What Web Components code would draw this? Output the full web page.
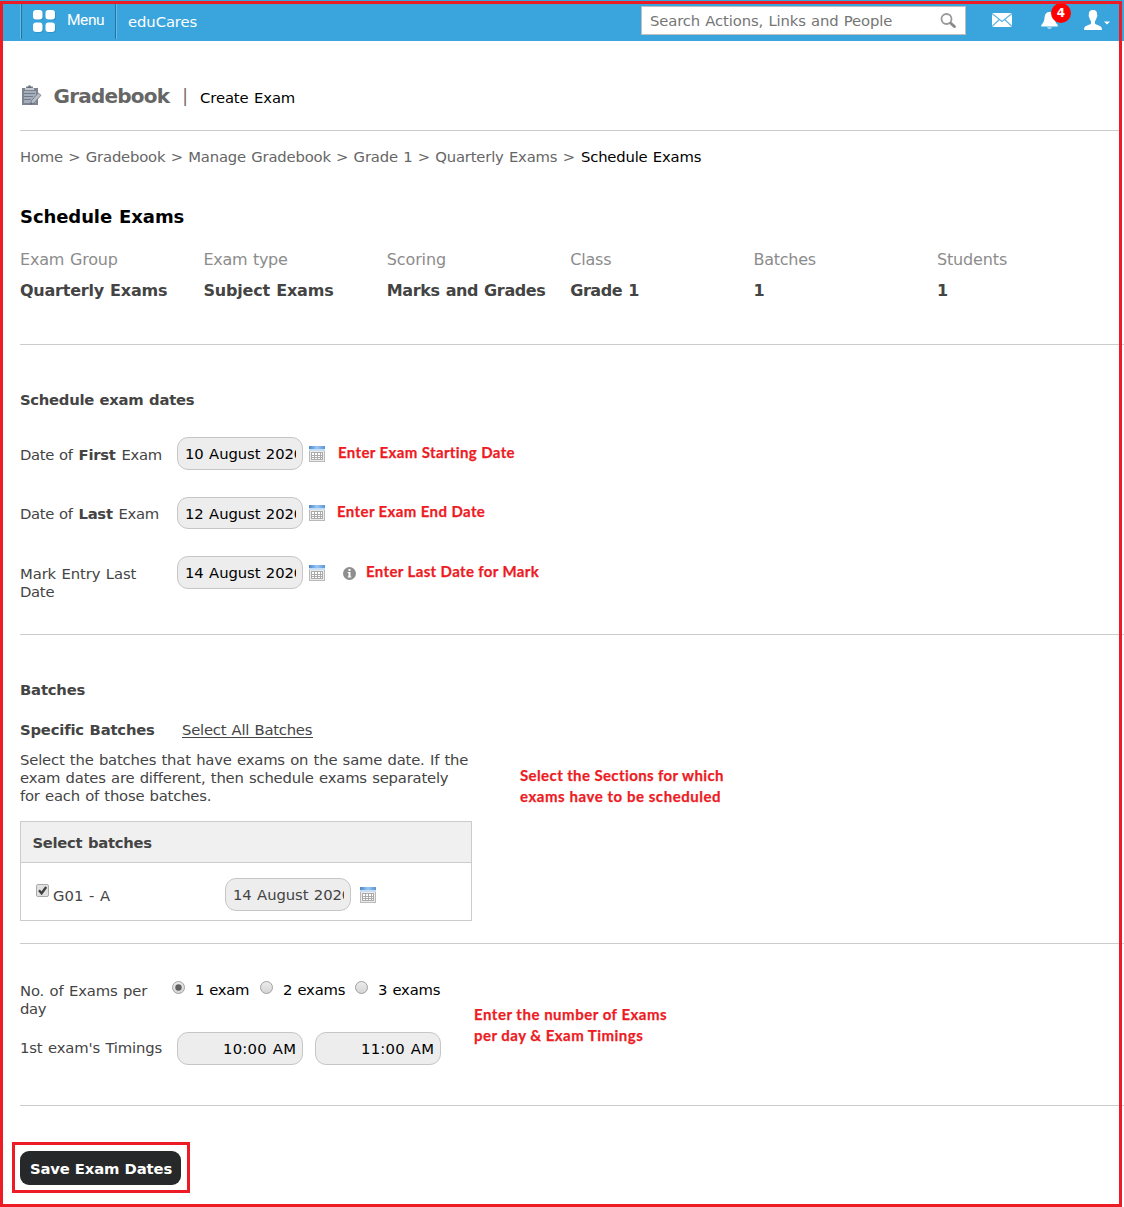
<!DOCTYPE html>
<html lang="en">
<head>
<meta charset="utf-8">
<title>Schedule Exams</title>
<style>
html,body{margin:0;padding:0;background:#fff}
body{font:14.8px/18px "DejaVu Sans",sans-serif;word-spacing:.8px;color:#444;height:1207px;overflow:hidden}
</style>
</head>
<body>
<exam-page></exam-page>
<script>
const define = (name, html, setup) => customElements.define(name, class extends HTMLElement {
  connectedCallback() {
    if (this.shadowRoot) return;
    this.attachShadow({ mode: 'open' }).innerHTML = html;
    if (setup) setup(this, this.shadowRoot);
  }
});

/* One line of text tracked to a set advance width */
define('fit-text', `<style>:host{display:inline-block;white-space:pre}span{display:inline-block}</style><span><slot></slot></span>`, (el, root) => {
  const w = parseFloat(el.getAttribute('w'));
  if (!w) return;
  const s = root.querySelector('span');
  const n = el.textContent.length;
  s.style.letterSpacing = ((w - 0.8 - s.getBoundingClientRect().width) / n) + 'px';
  el.style.width = w + 'px';
});

define('calendar-icon', `<style>:host{display:block;width:16px;height:16px;flex:none}svg{display:block}</style>
<svg width="16" height="16" viewBox="0 0 16 16"><defs><linearGradient id="g" x1="0" x2="1"><stop offset="0" stop-color="#4a87cc"/><stop offset=".5" stop-color="#9cc8f3"/><stop offset="1" stop-color="#5a94d6"/></linearGradient></defs>
<rect x=".5" y=".5" width="15" height="15" fill="#ececec" stroke="#b9b9b9"/><rect width="16" height="3" fill="url(#g)"/><rect y="3" width="16" height="2" fill="#c5def6"/>
<rect x="2" y="6" width="12" height="8" fill="#aaa"/><g fill="#fff"><path d="M3 7h2v2H3zM6 7h2v2H6zM9 7h2v2H9zM12 7h1v2h-1zM3 10h2v1H3zM6 10h2v1H6zM9 10h2v1H9zM12 10h1v1h-1zM3 12h2v1H3zM6 12h2v1H6zM9 12h2v1H9zM12 12h1v1h-1z"/></g></svg>`);

define('text-field', `<style>:host{box-sizing:border-box;display:flex;width:126px;height:33px;flex:none;border:1px solid #c6c6c6;border-radius:11px;background:#ededed;padding:7px 6px 0 7px;color:#000}
:host([short]){height:32px}:host([end]){justify-content:flex-end;padding-right:5px}:host([muted]){color:#444}div{overflow:hidden;white-space:pre;width:112px}:host([end]) div{width:auto}</style><div><slot></slot></div>`);

define('note-text', `<style>:host{display:block;color:#ed1c24;font:bold 15px/21px Lato,sans-serif;-webkit-text-stroke:.25px #ed1c24;word-spacing:0;white-space:nowrap}</style><slot></slot>`);

define('rule-line', `<style>:host{display:block;height:1px;background:#ccc;margin-left:20px}:host([inset]){margin-right:5px}</style>`);

define('radio-option', `<style>:host{display:flex;align-items:flex-start;color:#000}svg{display:block;margin:0 10px 0 0}</style>
<svg width="13" height="13" viewBox="0 0 13 13"><defs><linearGradient id="r" x2="0" y2="1"><stop stop-color="#ececec"/><stop offset="1" stop-color="#d4d4d4"/></linearGradient></defs><circle cx="6.5" cy="6.500" r="6" fill="url(#r)" stroke="#a0a0a0"/><circle class="dot" cx="6.500" cy="6.500" r="3.200" fill="#606060"/></svg><slot></slot>`,
  (el, root) => { if (!el.hasAttribute('checked')) root.querySelector('.dot').remove(); });

define('info-cell', `<style>:host{display:block;width:183.4px;flex:none;font-size:16px}div{line-height:19px;color:#8c8c8c;height:31px}b{display:block;line-height:19px;color:#444}</style><div><slot name="label"></slot></div><b><slot></slot></b>`);

define('form-row', `<style>:host{display:flex;align-items:flex-start}.l{width:157px;flex:none}</style><div class="l"><slot name="label"></slot></div><slot></slot>`);

define('top-bar', `<style>
:host{display:flex;box-sizing:border-box;height:41px;background:#3aa5dd;color:#fff;padding-left:20px;align-items:flex-start}
.menu{display:flex;width:93px;height:35px;margin-top:4px;border-left:1px solid #68bce8;border-right:1px solid #68bce8;box-shadow:inset 1px 0 #23749f,inset -1px 0 #23749f;padding-left:2px;flex:none}
.menu svg{margin:5px 0 0 9px;flex:none}.menu fit-text{font:15.5px/20px Roboto,sans-serif;margin:6px 0 0 9px}
.brand{margin:13px 0 0 11px;width:513px;flex:none}
.search{box-sizing:border-box;width:325px;height:29px;margin-top:6px;background:#fff;border:1px solid #bfbfbf;color:#757575;display:flex;padding:5px 0 0 8px;flex:none}
.search svg{margin-left:47px}
.mail{margin:13px 0 0 26px;flex:none}.bell{margin:11px 0 0 29px;flex:none;position:relative;width:17px;height:19px}
.badge{position:absolute;left:10px;top:-8px;width:20px;height:20px;border-radius:50%;background:#f00;text-align:center;font:bold 12px/20px "DejaVu Sans",sans-serif}
.user{margin:10px 0 0 26px;flex:none}svg{display:block}
</style>
<div class="menu"><svg width="26" height="26" viewBox="0 0 26 26"><g fill="#2487b8" opacity=".5"><rect x="2" y="2" width="9.500" height="9.500" rx="3"/><rect x="14.500" y="2" width="9.500" height="9.500" rx="3"/><rect x="2" y="14.500" width="9.500" height="9.500" rx="3"/><rect x="14.500" y="14.500" width="9.500" height="9.500" rx="3"/></g><g fill="#fff"><rect x="1" y="1" width="9.500" height="9.500" rx="3"/><rect x="13.500" y="1" width="9.500" height="9.500" rx="3"/><rect x="1" y="13.500" width="9.500" height="9.500" rx="3"/><rect x="13.500" y="13.500" width="9.500" height="9.500" rx="3"/></g></svg><fit-text w="38">Menu</fit-text></div>
<div class="brand"><fit-text w="70">eduCares</fit-text></div>
<div class="search"><fit-text w="243">Search Actions, Links and People</fit-text><svg width="18" height="18" viewBox="0 0 18 18" fill="none"><circle cx="6.500" cy="7" r="5" stroke="#999" stroke-width="1.800"/><path d="M10.800 11.200l3.700 3.400" stroke="#8a8a8a" stroke-width="2.800" stroke-linecap="round"/></svg></div>
<svg class="mail" width="20" height="14" viewBox="0 0 20 14"><rect width="20" height="14" rx="1" fill="#fff"/><path d="M0 .5l10 8 10-8M0 13.500l7.300-7M20 13.500l-7.300-7" fill="none" stroke="#5bb4e2" stroke-width="1.200"/></svg>
<div class="bell"><svg width="17" height="19" viewBox="0 0 17 19" fill="#fff"><path d="M8.500 1C5.400 1 3.800 3 3.600 6c-.2 3.200-.5 5-3.300 8v1.500h16.400V14c-2.800-3-3.100-4.800-3.300-8C13.200 3 11.600 1 8.500 1zM6 16.500h5c-.5 1.500-4.500 1.500-5 0z"/></svg><div class="badge">4</div></div>
<svg class="user" width="27" height="21" viewBox="0 0 27 21" fill="#fff"><path d="M9 0C5.900 0 4.800 2 4.900 4.700 4.300 5 4.900 7.300 5.500 7.700c.3 1.700.8 2.600 1.500 3.300v2.500c-.5 1.500-5.800 1.800-6.700 4.300L0 20h18l-.3-2.200c-.9-2.500-6.200-2.800-6.700-4.300V11c.7-.7 1.200-1.600 1.500-3.300.6-.4 1.200-2.700.6-3C13.200 2 12.100 0 9 0zM20 11.500h6l-3 3z"/></svg>`);

define('page-title', `<style>:host{display:flex;height:89px;padding-left:22px;box-sizing:border-box;padding-top:43px;align-items:flex-start}
svg{margin-top:1px;flex:none}.t{font:bold 20px/24px "DejaVu Sans",sans-serif;color:#666;margin-left:11.5px}.bar{font-size:17px;line-height:24px;width:30px;text-align:center;color:#766a62}.s{color:#000;margin-top:5px}</style>
<svg width="20" height="21" viewBox="0 0 20 21"><path fill="#7d8490" d="M0 3h4V1.500h2Q6.300 0 7.500 0T9 1.500h2V3h5v17H0z"/><path fill="#a5aebb" d="M2 6h12v12H2z"/><path fill="#c4c9d1" d="M3 3h9v2H3z"/><path d="M2 8.500h11M2 11.500h9M2 14.500h7" stroke="#727b89"/><path fill="#b8bec8" stroke="#6b7380" stroke-width=".8" d="M8.500 19.300l1-3.600L16.200 8l2.800 2.300-6.800 7.500z"/><path fill="#606875" d="M5.500 2h4v1h-4zM8 19.800l.8-2.500 1.800 1.500z"/></svg>
<fit-text class="t" w="116.500">Gradebook</fit-text><span class="bar">|</span><fit-text class="s" w="96">Create Exam</fit-text>`);

define('bread-crumbs', `<style>:host{display:flex;padding:17px 0 0 20px;color:#666;height:59px;box-sizing:border-box}b{font-weight:400;color:#000;display:block}</style>
<fit-text w="561">Home &gt; Gradebook &gt; Manage Gradebook &gt; Grade 1 &gt; Quarterly Exams &gt; </fit-text><b><fit-text w="121">Schedule Exams</fit-text></b>`);

define('exam-summary', `<style>:host{display:block;height:154px;padding-left:20px;box-sizing:border-box;padding-top:16px}h1{margin:0;font:bold 18px/22px "DejaVu Sans",sans-serif;color:#000}.g{display:flex;margin-top:22px}</style>
<h1><fit-text w="165">Schedule Exams</fit-text></h1>
<div class="g">
<info-cell><fit-text slot="label" w="98.500">Exam Group</fit-text><fit-text w="148">Quarterly Exams</fit-text></info-cell>
<info-cell><fit-text slot="label" w="85">Exam type</fit-text><fit-text w="131">Subject Exams</fit-text></info-cell>
<info-cell><fit-text slot="label" w="60">Scoring</fit-text><fit-text w="159.500">Marks and Grades</fit-text></info-cell>
<info-cell><fit-text slot="label" w="42">Class</fit-text><fit-text w="69.500">Grade 1</fit-text></info-cell>
<info-cell><fit-text slot="label" w="63">Batches</fit-text>1</info-cell>
<info-cell><fit-text slot="label" w="71">Students</fit-text>1</info-cell></div>`);

define('exam-dates', `<style>:host{display:block;box-sizing:border-box;height:289px;padding:46px 0 0 20px}form-row{height:60px}form-row.a{height:59px}h2{margin:0 0 28px;font:bold 14.8px/18px "DejaVu Sans",sans-serif}
.lab{margin-top:9px}calendar-icon{margin:9px 0 0 6px}note-text{margin:5px 0 0 13px}svg{margin:11px 0 0 18px;flex:none}</style>
<h2><fit-text w="175">Schedule exam dates</fit-text></h2>
<form-row><div slot="label" class="lab"><fit-text w="58.500">Date of </fit-text><b><fit-text w="38">First</fit-text></b><fit-text w="46"> Exam</fit-text></div><text-field><fit-text w="119">10 August 2020</fit-text></text-field><calendar-icon></calendar-icon><note-text><fit-text w="178">Enter Exam Starting Date</fit-text></note-text></form-row>
<form-row class="a"><div slot="label" class="lab" style="margin-top:8px"><fit-text w="58.500">Date of </fit-text><b><fit-text w="35">Last</fit-text></b><fit-text w="46"> Exam</fit-text></div><text-field short><fit-text w="119">12 August 2020</fit-text></text-field><calendar-icon style="margin-top:8px"></calendar-icon><note-text style="margin:4px 0 0 12px"><fit-text w="149">Enter Exam End Date</fit-text></note-text></form-row>
<form-row><div slot="label" class="lab"><fit-text w="117">Mark Entry Last</fit-text><br><fit-text w="35">Date</fit-text></div><text-field><fit-text w="119">14 August 2020</fit-text></text-field><calendar-icon></calendar-icon><svg width="13" height="13" viewBox="0 0 13 13"><circle cx="6.500" cy="6.500" r="6.500" fill="#8e8e8e"/><path fill="#fff" d="M5.500 2h2v2h-2zM4.700 5h2.800v4.500h.8v1H4.700v-1h.8V6h-.8z"/></svg><note-text style="margin-left:10px"><fit-text w="174">Enter Last Date for Mark</fit-text></note-text></form-row>`);

define('batch-table', `<style>:host{display:block;box-sizing:border-box;width:452px;height:100px;border:1px solid #ccc}.h{background:#f0f0f0;border-bottom:1px solid #ccc;padding:12px 0 0 11.5px;height:28px;font-weight:bold}
.r{display:flex;align-items:flex-start;padding:15px 0 0 15px}svg{margin:6px 4px 0 0;flex:none}.g{margin-top:9px;width:172px}calendar-icon{margin:9px 0 0 9px}</style>
<div class="h"><fit-text w="120">Select batches</fit-text></div>
<div class="r"><svg width="13" height="13" viewBox="0 0 13 13"><rect x=".5" y=".5" width="12" height="12" rx="1.500" fill="#e1e1e1" stroke="#aaa"/><path d="M3 6.300l2.600 3L10.200 3" fill="none" stroke="#404040" stroke-width="2.300"/></svg><div class="g"><fit-text w="58">G01 - A</fit-text></div><text-field muted><fit-text w="119">14 August 2020</fit-text></text-field><calendar-icon></calendar-icon></div>`);

define('batch-section', `<style>:host{display:block;box-sizing:border-box;height:308px;padding:46px 0 0 20px}h2{margin:0 0 22px;font:bold 14.8px/18px "DejaVu Sans",sans-serif}.c{display:flex}.left{width:500px}.s{display:flex;gap:27px;margin-bottom:12px}.u{box-shadow:inset 0 -1px #444;height:17px;margin-bottom:1px}p{margin:0 0 16px}note-text{margin-top:44px}</style>
<h2><fit-text w="66">Batches</fit-text></h2>
<div class="c"><div class="left"><div class="s"><b><fit-text w="135">Specific Batches</fit-text></b><fit-text class="u" w="131">Select All Batches</fit-text></div>
<p><fit-text w="449">Select the batches that have exams on the same date. If the</fit-text><br><fit-text w="429">exam dates are different, then schedule exams separately</fit-text><br><fit-text w="192">for each of those batches.</fit-text></p><batch-table></batch-table></div>
<note-text><fit-text w="205">Select the Sections for which</fit-text><br><fit-text w="202">exams have to be scheduled</fit-text></note-text></div>`);

define('timing-section', `<style>:host{display:flex;box-sizing:border-box;height:161px;padding:37px 0 0 20px}.f{width:454px;flex:none}form-row{height:51px}.o{display:flex;margin-left:-5px}.o radio-option{width:88px;flex:none}.o radio-option+radio-option+radio-option{margin-left:7px}text-field{margin-right:12px}note-text{margin-top:23px}.n{margin-top:1px}</style>
<div class="f"><form-row><div slot="label" class="n"><fit-text w="128">No. of Exams per</fit-text><br><fit-text w="27">day</fit-text></div><div class="o"><radio-option checked><fit-text w="55">1 exam</fit-text></radio-option><radio-option><fit-text w="63">2 exams</fit-text></radio-option><radio-option><fit-text w="63">3 exams</fit-text></radio-option></div></form-row>
<form-row><div slot="label" style="margin-top:7px"><fit-text w="143">1st exam's Timings</fit-text></div><text-field end><fit-text w="74">10:00 AM</fit-text></text-field><text-field end style="--r:6px"><fit-text w="74">11:00 AM</fit-text></text-field></form-row></div>
<note-text><fit-text w="194">Enter the number of Exams</fit-text><br><fit-text w="170">per day &amp; Exam Timings</fit-text></note-text>`);

define('save-button', `<style>:host{display:block;box-sizing:border-box;width:178px;height:51px;margin:36px 0 0 12px;border:3px solid #ed1c24;padding:6px 5px}button{display:block;width:161px;height:34px;border:0;border-radius:9px;background:#272829;color:#fff;font:bold 14.8px/18px "DejaVu Sans",sans-serif;padding:2px 0 0 1px;margin:0;text-align:center}</style><button><fit-text w="143">Save Exam Dates</fit-text></button>`);

define('exam-page', `<style>:host{display:block;position:relative;width:1124px;height:1207px;overflow:hidden}.frame{position:absolute;left:0;top:1px;width:1116px;height:1200px;border:3px solid #ed1c24;pointer-events:none}</style>
<top-bar></top-bar><page-title></page-title><rule-line inset></rule-line><bread-crumbs></bread-crumbs><exam-summary></exam-summary><rule-line></rule-line><exam-dates></exam-dates><rule-line></rule-line><batch-section></batch-section><rule-line></rule-line><timing-section></timing-section><rule-line></rule-line><save-button></save-button><div class="frame"></div>`);
</script>
</body>
</html>
